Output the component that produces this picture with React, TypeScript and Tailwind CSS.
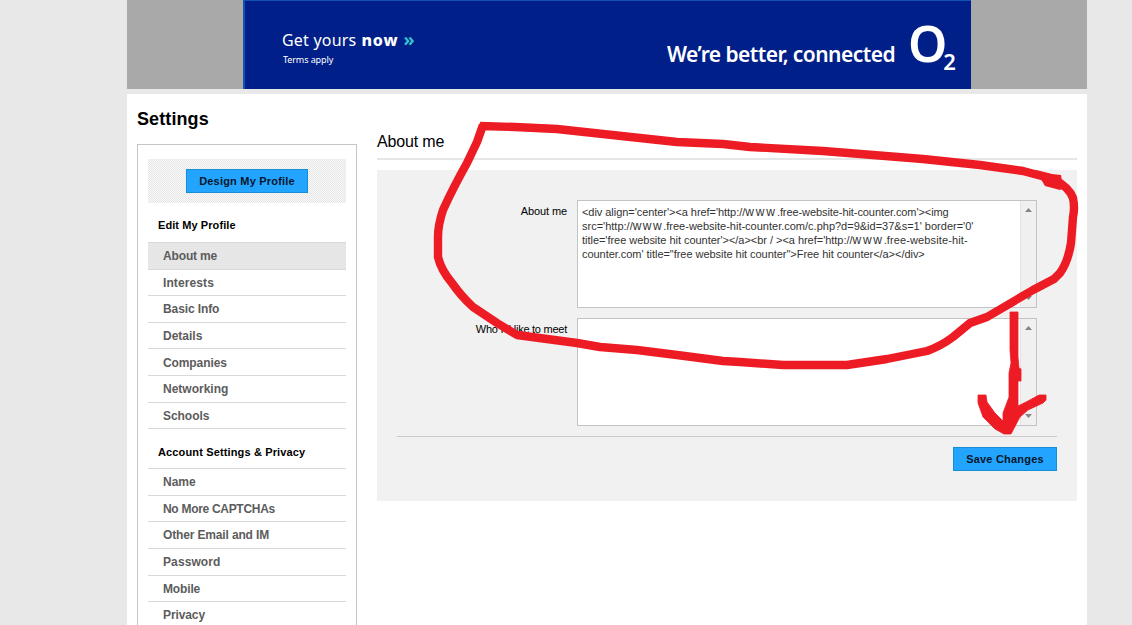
import React from "react";

const profileLinks = [
  { label: "About me", spacing: "tracking-[-0.15px]" },
  { label: "Interests", spacing: "tracking-[0.1px]" },
  { label: "Basic Info", spacing: "tracking-[-0.1px]" },
  { label: "Details", spacing: "tracking-[0px]" },
  { label: "Companies", spacing: "tracking-[-0.1px]" },
  { label: "Networking", spacing: "tracking-[0px]" },
  { label: "Schools", spacing: "tracking-[-0.05px]" },
];

const accountLinks = [
  { label: "Name", spacing: "tracking-[0px]" },
  { label: "No More CAPTCHAs", spacing: "tracking-[-0.3px]" },
  { label: "Other Email and IM", spacing: "tracking-[-0.15px]" },
  { label: "Password", spacing: "tracking-[0.1px]" },
  { label: "Mobile", spacing: "tracking-[-0.15px]" },
  { label: "Privacy", spacing: "tracking-[-0.1px]" },
];

type Segment = { text: string; spacing: string };

const aboutLines: Segment[][] = [
  [
    { text: "<div align='center'><a href='http://", spacing: "tracking-[-0.05px]" },
    { text: "www", spacing: "text-[12px] tracking-[1.9px]" },
    { text: ".free-website-hit-counter.com'><img", spacing: "tracking-[-0.08px]" },
  ],
  [
    { text: "src='http://", spacing: "tracking-[0px]" },
    { text: "www", spacing: "text-[12px] tracking-[1.5px]" },
    { text: ".free-website-hit-counter.com/c.php?d=9&id=37&s=1' border='0'", spacing: "tracking-[0px]" },
  ],
  [
    { text: "title='free website hit counter'></a><br / ><a href='http://", spacing: "tracking-[-0.03px]" },
    { text: "www", spacing: "text-[12px] tracking-[1.7px]" },
    { text: ".free-website-hit-", spacing: "tracking-[0.12px]" },
  ],
  [{ text: "counter.com' title=\"free website hit counter\">Free hit counter</a></div>", spacing: "tracking-[-0.04px]" }],
];

type Item = { label: string; spacing: string };

function Menu({ items, active }: { items: Item[]; active?: string }) {
  return (
    <ul className="border-t border-[#d8d8d8]">
      {items.map(({ label, spacing }) => (
        <li
          key={label}
          className={`flex h-[26.6px] items-center border-b border-[#d8d8d8] pt-[0.7px] pl-[15px] text-[12px] leading-none font-bold whitespace-nowrap text-[#5c5c5c] ${spacing} ${label === active ? "bg-[#e6e6e6]" : ""}`}
        >
          {label}
        </li>
      ))}
    </ul>
  );
}

function Scrollbar() {
  return (
    <div className="flex w-4 shrink-0 flex-col items-center justify-between border-l border-[#e2e2e2] bg-[#f0f0f0] py-[7px]">
      <svg width="7" height="4" viewBox="0 0 7 4"><path d="M0 4 3.5 0 7 4Z" fill="#858585" /></svg>
      <svg width="7" height="4" viewBox="0 0 7 4"><path d="M0 0 3.5 4 7 0Z" fill="#858585" /></svg>
    </div>
  );
}

function Field({ label, spacing, lines }: { label: string; spacing: string; lines: Segment[][] }) {
  return (
    <div className="flex gap-[10px]">
      <div className={`w-[190px] pt-1 text-right text-[11px] leading-[14px] whitespace-nowrap text-black ${spacing}`}>{label}</div>
      <div className="flex h-[108px] w-[460px] border border-[#c3c3c3] bg-white">
        <div className="flex-1 pt-1 pl-1 text-[11px] leading-[14px] text-[#333]">
          {lines.map((line, i) => (
            <div key={i} className="h-[14px] whitespace-nowrap">
              {line.map((part) => (
                <span key={part.text} className={part.spacing}>{part.text}</span>
              ))}
            </div>
          ))}
        </div>
        <Scrollbar />
      </div>
    </div>
  );
}

function Markup() {
  return (
    <svg className="pointer-events-none absolute top-0 left-0" width="1132" height="625" viewBox="0 0 1132 625">
      <path
        fill="none"
        stroke="#ed1c24"
        strokeWidth="8.4"
        strokeLinejoin="round"
        d="M480 126 L515 127 L557 129 L603 134 L677 142 L723 144 L750 147 L823 151 L873 155 L923 159 L980 165 L1023 171 L1053 179 Q1069 187 1073 198 Q1075 208 1073 217 L1071 243 Q1068 262 1060 273 L1054 279 L1033 290 L987 317 L970 323 L953 337 Q941 346 927 351 L887 359 L847 365 L783 365 L740 362 L723 361 L677 355 L637 350 L600 347 L577 343 L517 335 L497 323 L473 307 Q461 296 452 283 Q441 270 438 257 L438 237 Q438 225 443 210 Q453 188 467 163 L477 142 L483 125"
      />
      <g fill="#ed1c24">
        <path d="M1036 170 L1052 174 L1061 175 L1062 181 L1068 186 L1060 190 L1045 186 L1042 181Z" />
        <path stroke="#ed1c24" strokeWidth="0.8" d="M1010 312 H1018 V357 L1019 368 L1021 369 V381 H1018 V406 L1028 401 L1039 395 H1046 V400 L1043 403 L1028 410 L1020 417 L1011 434 H1004 L995 429 L983 417 L978 403 V395 H986 L987 402 L995 413 L1003 421 V413 L1009 397 V373 L1011 363 L1010 350Z" />
      </g>
    </svg>
  );
}

export default function App() {
  return (
    <div className="relative h-[625px] w-[1132px] overflow-hidden bg-[#e8e8e8] pl-[127px] font-['Liberation_Sans',Arial,sans-serif] text-black">
      <header className="flex h-[89px] w-[960px] justify-center bg-[#a9a9a9]">
        <div className="flex w-[728px] justify-between border-t border-l-2 border-t-[#1252b5] border-l-[#1252b5] bg-[#001f89] text-white">
          <div className="pt-[26px] pl-[37px]">
            <div className="flex items-baseline font-['Noto_Sans',sans-serif] text-[16px] leading-[24px] whitespace-nowrap">
              <span className="tracking-[0.2px]">Get yours</span>
              <span className="ml-[5px] font-extrabold tracking-[0.9px]">now</span>
              <span className="ml-[5px] text-[18px] leading-[24px] font-bold text-[#36c2d0]">»</span>
            </div>
            <div className="mt-px pl-px font-['Noto_Sans',sans-serif] text-[9px] leading-[14px] tracking-[-0.1px]">Terms apply</div>
          </div>
          <div className="flex pr-[15px]">
            <div className="mt-[38px] font-['Noto_Sans',sans-serif] text-[21px] leading-[30px] font-semibold tracking-[-0.55px] whitespace-nowrap">We’re better, connected</div>
            <div className="ml-[13px] flex w-[48px] font-['Noto_Sans',sans-serif] leading-none font-semibold">
              <span className="mt-[17px] text-[50px] leading-[50px] tracking-[-4px]">O</span>
              <span className="mt-[49px] text-[22px] leading-[22px]">2</span>
            </div>
          </div>
        </div>
      </header>
      <main className="mt-[5px] flex h-[531px] w-[960px] items-start bg-white pl-[10px]">
        <aside className="w-[220px]">
          <h1 className="pt-[14px] text-[18px] leading-[22px] font-bold tracking-[0.1px]">Settings</h1>
          <nav className="mt-[14px] h-[520px] border border-[#c5c5c5] px-[10px] pt-[14px]">
            <div className="flex h-[44px] items-center justify-center bg-[#f7f7f7] bg-[repeating-conic-gradient(#e5e5e5_0_25%,#fafafa_0_50%)] bg-[length:2px_2px]">
              <button className="h-6 w-[122px] border border-[#158ed8] bg-[#23a5ff] text-[11px] leading-none font-bold tracking-[0.2px] whitespace-nowrap text-[#06152b]">Design My Profile</button>
            </div>
            <h2 className="h-[39px] pt-[15px] pl-[10px] text-[11px] leading-[14px] font-bold tracking-[0.08px] whitespace-nowrap">Edit My Profile</h2>
            <Menu items={profileLinks} active="About me" />
            <h2 className="h-[39px] pt-[16px] pl-[10px] text-[11px] leading-[14px] font-bold tracking-[0.14px] whitespace-nowrap">Account Settings &amp; Privacy</h2>
            <Menu items={accountLinks} />
          </nav>
        </aside>
        <section className="ml-5 w-[700px]">
          <h2 className="h-[66px] border-b-2 border-[#e6e6e6] pt-[38px] text-[16px] leading-5 tracking-[-0.15px]">About me</h2>
          <div className="mt-[10px] h-[331px] bg-[#f1f1f1] pt-[30px]">
            <div className="flex flex-col gap-[10px]">
              <Field label="About me" spacing="tracking-[-0.1px]" lines={aboutLines} />
              <Field label="Who I'd like to meet" spacing="tracking-[-0.25px]" lines={[]} />
            </div>
            <div className="mx-5 mt-[10px] flex justify-end border-t border-[#c9c9c9] pt-[10px]">
              <button className="h-6 w-[104px] border border-[#158ed8] bg-[#23a5ff] text-[11px] leading-none font-bold tracking-[0.2px] whitespace-nowrap text-[#06152b]">Save Changes</button>
            </div>
          </div>
        </section>
      </main>
      <Markup />
    </div>
  );
}
